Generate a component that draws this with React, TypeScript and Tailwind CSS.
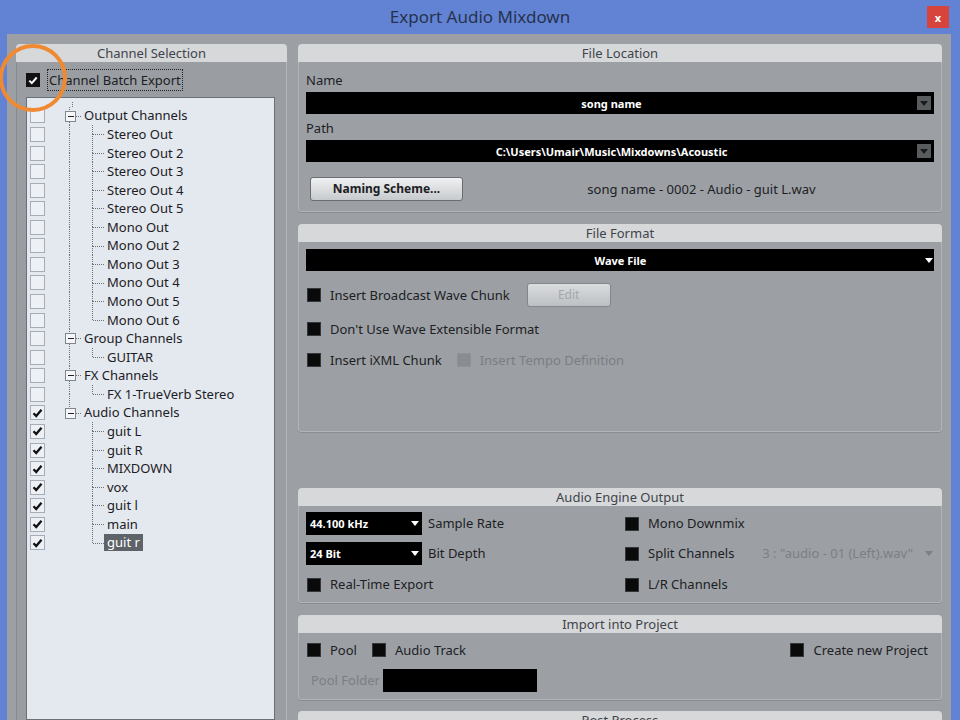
import React from 'react';

type Group = { name: string; checked: boolean; children: string[] };

const groups: Group[] = [
  {
    name: 'Output Channels',
    checked: false,
    children: ['Stereo Out', 'Stereo Out 2', 'Stereo Out 3', 'Stereo Out 4', 'Stereo Out 5', 'Mono Out', 'Mono Out 2', 'Mono Out 3', 'Mono Out 4', 'Mono Out 5', 'Mono Out 6'],
  },
  { name: 'Group Channels', checked: false, children: ['GUITAR'] },
  { name: 'FX Channels', checked: false, children: ['FX 1-TrueVerb Stereo'] },
  { name: 'Audio Channels', checked: true, children: ['guit L', 'guit R', 'MIXDOWN', 'vox', 'guit l', 'main', 'guit r'] },
];

const SELECTED = 'guit r';

function TreeCheck({ checked }: { checked: boolean }) {
  return (
    <div className="w-[15px] h-[15px] shrink-0 border border-[#a6adb6] bg-[#edf0f5] flex items-center justify-center">
      {checked && (
        <svg width="11" height="10" viewBox="0 0 11 10">
          <path d="M1.5 5.2 L4.2 8 L9.5 1.8" fill="none" stroke="#111" strokeWidth="2.3" />
        </svg>
      )}
    </div>
  );
}

// dotted connector cell of the tree
function Lines({ up, down, right, box }: { up?: boolean; down?: boolean; right?: boolean; box?: boolean }) {
  return (
    <svg className="w-[23px] h-full shrink-0" shapeRendering="crispEdges">
      {up && <line x1="11.5" y1="0" x2="11.5" y2="50%" stroke="#6c727a" strokeDasharray="1 1" />}
      {down && <line x1="11.5" y1="50%" x2="11.5" y2="100%" stroke="#6c727a" strokeDasharray="1 1" />}
      {right && <line x1={box ? 16 : 12} y1="50%" x2="23" y2="50%" stroke="#6c727a" strokeDasharray="1 1" />}
      {box && (
        <svg x="6.5" y="50%" overflow="visible">
          <rect x="0.5" y="-5" width="10" height="10" fill="#f4f6f9" stroke="#7f868e" />
          <line x1="3" y1="0" x2="9" y2="0" stroke="#222" />
        </svg>
      )}
    </svg>
  );
}

function ChannelTree() {
  return (
    <div className="flex-1 border border-[#6b7075] bg-[#e4e9f0] overflow-hidden">
      <div className="h-[8.6px] flex pl-[34px]">
        <Lines down />
      </div>
      {groups.map((g, gi) => {
        const lastGroup = gi === groups.length - 1;
        return (
          <div key={g.name}>
            <div className="h-[18.57px] flex items-center pl-[3px]">
              <TreeCheck checked={g.checked} />
              <div className="ml-[13px] h-full flex">
                <Lines up down={!lastGroup} right box />
              </div>
              <span className="ml-[3px] leading-none">{g.name}</span>
            </div>
            {g.children.map((c, ci) => {
              const lastChild = ci === g.children.length - 1;
              const sel = c === SELECTED;
              return (
                <div key={c} className="h-[18.57px] flex items-center pl-[3px]">
                  <TreeCheck checked={g.checked} />
                  <div className="ml-[13px] h-full flex">
                    <Lines up={!lastGroup} down={!lastGroup} />
                    <Lines up down={!lastChild} right />
                  </div>
                  {sel ? (
                    <span className="h-[17px] px-[3px] flex items-center bg-[#5d6368] text-white leading-none">{c}</span>
                  ) : (
                    <span className="ml-[3px] leading-none">{c}</span>
                  )}
                </div>
              );
            })}
          </div>
        );
      })}
    </div>
  );
}

function Header({ title }: { title: string }) {
  return (
    <div className="h-[18px] shrink-0 rounded-t-[4px] bg-[#d6d8da] text-center leading-[18px] text-[#3e444a]">{title}</div>
  );
}

function Section({ title, body, children }: { title: string; body: string; children?: React.ReactNode }) {
  return (
    <div className="flex flex-col shrink-0">
      <Header title={title} />
      <div className={`border border-t-0 border-[#b1b5b8] rounded-b-[4px] shadow-[0_1px_0_#898d91] px-[7px] ${body}`}>{children}</div>
    </div>
  );
}

function DarkBox({ disabled }: { disabled?: boolean }) {
  return (
    <span
      className={`w-[14px] h-[14px] shrink-0 border ${disabled ? 'bg-[#898d91] border-[#8f9397]' : 'bg-[#0a0a0a] border-[#34373a]'}`}
    />
  );
}

function Check({ label, disabled }: { label: string; disabled?: boolean }) {
  return (
    <div className="flex items-center">
      <DarkBox disabled={disabled} />
      <span className={`ml-[9px] leading-none ${disabled ? 'text-[#7a7e82]' : ''}`}>{label}</span>
    </div>
  );
}

function Tri({ color = 'white' }: { color?: string }) {
  return (
    <svg width="8" height="5" viewBox="0 0 8 5" className="shrink-0">
      <path d="M0 0H8L4 5Z" fill={color} />
    </svg>
  );
}

function PathField({ value }: { value: string }) {
  return (
    <div className="h-[22px] bg-black flex items-center">
      <span className="flex-1 text-center text-white font-bold text-[11px] leading-none">{value}</span>
      <div className="w-[14px] h-[14px] mr-[3px] bg-[#595c5f] flex items-center justify-center">
        <Tri color="#1b1b1b" />
      </div>
    </div>
  );
}

function Select({ value }: { value: string }) {
  return (
    <div className="w-[116px] h-[23px] shrink-0 bg-black flex items-center pl-[4px] pr-[3px]">
      <span className="flex-1 text-white font-bold text-[11px] leading-none">{value}</span>
      <Tri />
    </div>
  );
}

export default function App() {
  return (
    <div className="relative w-[960px] h-[720px] overflow-hidden bg-[#6283d4] font-['Noto_Sans','Open_Sans',sans-serif] text-[13px] text-[#1c2024] flex flex-col">
      {/* title bar */}
      <div className="h-[34px] shrink-0 flex items-start">
        <div className="w-[33px] shrink-0" />
        <div className="flex-1 text-center text-[17px] leading-[34px] text-[#26324d]">Export Audio Mixdown</div>
        <div className="mt-[6px] mr-[11px] w-[22px] h-[22px] bg-[#d7443c] flex items-center justify-center text-white text-[11px] font-bold leading-none">
          x
        </div>
      </div>

      <div className="flex-1 min-h-0 ml-[7px] mr-[9px] bg-[#9ca0a4] flex pt-[10px] pl-[9px] pr-[9px] gap-[11px]">
        {/* Channel selection */}
        <div className="w-[271px] shrink-0 flex flex-col">
          <Header title="Channel Selection" />
          <div className="flex-1 min-h-0 flex flex-col border-l border-[#878b8f] border-r border-r-[#b1b5b8] bg-[#9a9ea2] pl-[9px] pr-[11px]">
            <div className="mt-[7px] h-[22px] flex items-center">
              <span className="w-[14px] h-[14px] bg-[#111] flex items-center justify-center">
                <svg width="10" height="9" viewBox="0 0 10 9">
                  <path d="M1.3 4.6 L3.8 7.1 L8.7 1.5" fill="none" stroke="#fff" strokeWidth="2" />
                </svg>
              </span>
              <span className="ml-[7px] h-[22px] px-[1px] flex items-center border border-dotted border-[#202326] leading-none">
                Channel Batch Export
              </span>
            </div>
            <div className="mt-[6px] flex-1 min-h-0 flex">
              <ChannelTree />
            </div>
          </div>
        </div>

        {/* right column */}
        <div className="flex-1 min-w-0 flex flex-col">
          <Section title="File Location" body="h-[150px] pt-[9px]">
            <div className="leading-[18px]">Name</div>
            <div className="mt-[3px]">
              <PathField value="song name" />
            </div>
            <div className="mt-[5px] leading-[18px]">Path</div>
            <div className="mt-[3px]">
              <PathField value="C:\Users\Umair\Music\Mixdowns\Acoustic" />
            </div>
            <div className="mt-[15px] flex items-center">
              <div className="ml-[4px] w-[153px] h-[24px] rounded-[3px] border border-[#6a6e72] bg-gradient-to-b from-[#f0f1f2] to-[#c7cacd] flex items-center justify-center font-bold text-[12px] leading-none">
                Naming Scheme...
              </div>
              <span className="flex-1 text-center leading-none pl-[6px]">song name - 0002 - Audio - guit L.wav</span>
            </div>
          </Section>

          <div className="mt-[12px]">
            <Section title="File Format" body="h-[190px] pt-[7px]">
              <div className="h-[22px] bg-black flex items-center">
                <span className="flex-1 text-center text-white font-bold text-[11px] leading-none pl-[10px]">Wave File</span>
                <span className="mr-[1px]">
                  <Tri />
                </span>
              </div>
              <div className="mt-[12px] h-[24px] flex items-center pl-[1px]">
                <Check label="Insert Broadcast Wave Chunk" />
                <div className="ml-[17px] w-[84px] h-[24px] rounded-[3px] border border-[#83878b] bg-gradient-to-b from-[#dadcde] to-[#bcc0c3] flex items-center justify-center text-[12px] text-[#a2a6aa] leading-none">
                  Edit
                </div>
              </div>
              <div className="mt-[10px] h-[24px] flex items-center pl-[1px]">
                <Check label="Don't Use Wave Extensible Format" />
              </div>
              <div className="mt-[7px] h-[24px] flex items-center pl-[1px] gap-[15px]">
                <Check label="Insert iXML Chunk" />
                <Check label="Insert Tempo Definition" disabled />
              </div>
            </Section>
          </div>

          <div className="mt-[56px]">
            <Section title="Audio Engine Output" body="h-[97px] pt-[6px]">
              <div className="flex">
                <div className="w-[318px] shrink-0 flex flex-col gap-[7px]">
                  <div className="h-[23px] flex items-center">
                    <Select value="44.100 kHz" />
                    <span className="ml-[6px] leading-none">Sample Rate</span>
                  </div>
                  <div className="h-[23px] flex items-center">
                    <Select value="24 Bit" />
                    <span className="ml-[6px] leading-none">Bit Depth</span>
                  </div>
                  <div className="h-[23px] flex items-center pl-[1px] mt-[1px]">
                    <Check label="Real-Time Export" />
                  </div>
                </div>
                <div className="flex-1 flex flex-col gap-[7px] pl-[1px]">
                  <div className="h-[23px] flex items-center">
                    <Check label="Mono Downmix" />
                  </div>
                  <div className="h-[23px] flex items-center">
                    <Check label="Split Channels" />
                    <span className="ml-auto text-[#7b7f83] leading-none">3 : "audio - 01 (Left).wav"</span>
                    <span className="ml-[12px] mr-[1px]">
                      <Tri color="#7b7f83" />
                    </span>
                  </div>
                  <div className="h-[23px] flex items-center mt-[1px]">
                    <Check label="L/R Channels" />
                  </div>
                </div>
              </div>
            </Section>
          </div>

          <div className="mt-[12px]">
            <Section title="Import into Project" body="h-[67px] pt-[6px]">
              <div className="h-[22px] flex items-center pl-[1px] pr-[6px]">
                <Check label="Pool" />
                <span className="ml-[15px]">
                  <Check label="Audio Track" />
                </span>
                <span className="ml-auto">
                  <Check label="Create new Project" />
                </span>
              </div>
              <div className="mt-[8px] h-[23px] flex items-center">
                <span className="ml-[5px] text-[#7b7f83] leading-none">Pool Folder</span>
                <div className="ml-[3px] w-[154px] h-[23px] bg-black" />
              </div>
            </Section>
          </div>

          <div className="mt-[11px]">
            <Header title="Post Process" />
          </div>
        </div>
      </div>

      {/* annotation circle */}
      <div className="absolute left-[-1px] top-[44px] w-[68px] h-[68px] rounded-full border-[4px] border-[#ef8a33]" />
    </div>
  );
}
